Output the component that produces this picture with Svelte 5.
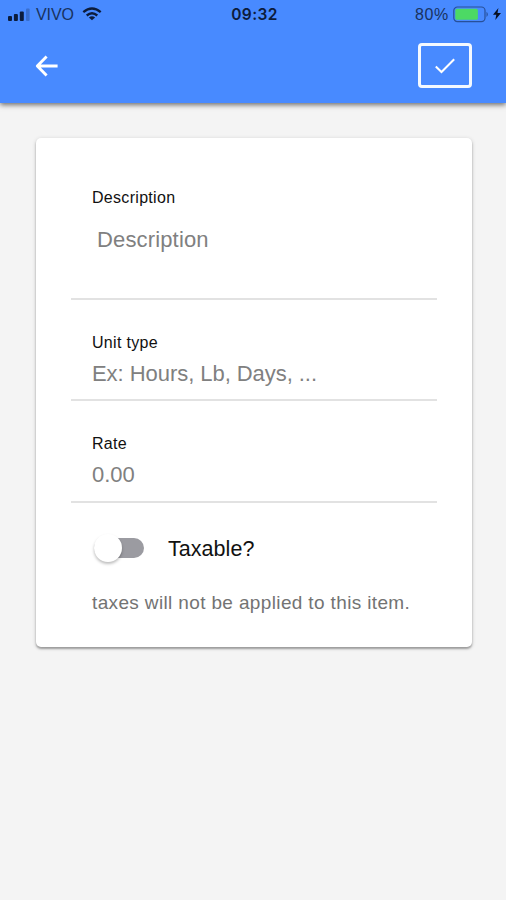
<script>
  let description = $state('');
  let unitType = $state('');
  let rate = $state('');
  let taxable = $state(false);
</script>

<div class="screen">
  <header>
    <div class="status">
      <div class="side">
        <svg class="signal" width="22" height="13" viewBox="0 0 22 13">
          <rect x="0" y="8" width="4" height="5" rx="1" />
          <rect x="5.9" y="6" width="4" height="7" rx="1" />
          <rect x="11.8" y="3.5" width="4" height="9.5" rx="1" />
          <rect x="18" y="0.5" width="3.6" height="12.5" rx="1" opacity=".25" />
        </svg>
        <span class="carrier">VIVO</span>
        <svg class="wifi" width="20" height="14" viewBox="0 0 20 14">
          <g fill="none" stroke="#0c1c3c" stroke-width="2.3">
            <path d="M1.3 5.2Q10 -2.2 18.7 5.2" />
            <path d="M4.7 8.5Q10 4 15.3 8.5" />
          </g>
          <path d="M10 13.3L6.9 10.5Q10 8 13.1 10.5Z" fill="#0c1c3c" />
        </svg>
      </div>
      <span class="time">09:32</span>
      <div class="side end">
        <span class="percent">80%</span>
        <svg class="battery" width="37" height="17" viewBox="0 0 37 17">
          <rect x=".8" y="1" width="31.2" height="14.6" rx="3.6" fill="none" stroke="#285099" stroke-width="1.2" />
          <rect x="2.3" y="2.8" width="22.6" height="11" rx="1.6" fill="#4cd964" />
          <path d="M33.5 5.7Q36.2 8.3 33.5 11Z" fill="#285099" />
        </svg>
        <svg class="bolt" width="8" height="12" viewBox="0 0 8 12">
          <path d="M5.4 0L0 6.7H3.3L2.3 12L8 5H4.5Z" fill="#081020" />
        </svg>
      </div>
    </div>
    <div class="toolbar">
      <button class="back" aria-label="Back">
        <svg width="24" height="24" viewBox="0 0 24 24" fill="none" stroke="#fff" stroke-width="2.9" stroke-linejoin="round">
          <path d="M12.6 2.6L3.3 12L12.6 21.4M3.6 12H23.6" />
        </svg>
      </button>
      <button class="save" aria-label="Save">
        <svg width="20" height="16" viewBox="0 0 20 16" fill="none" stroke="#fff" stroke-width="2">
          <path d="M.8 8.5L6.5 14L19.2 1.2" />
        </svg>
      </button>
    </div>
  </header>

  <main>
    <label class="field tall">
      <span>Description</span>
      <textarea placeholder="Description" bind:value={description}></textarea>
    </label>
    <label class="field unit">
      <span>Unit type</span>
      <input placeholder="Ex: Hours, Lb, Days, ..." bind:value={unitType} />
    </label>
    <label class="field rate">
      <span>Rate</span>
      <input placeholder="0.00" bind:value={rate} />
    </label>
    <button class="toggle" role="switch" aria-checked={taxable} onclick={() => (taxable = !taxable)}>
      <span class="track" class:on={taxable}><span class="knob"></span></span>
      <span class="name">Taxable?</span>
    </button>
    <p>taxes will {taxable ? '' : 'not '}be applied to this item.</p>
  </main>
</div>

<style>
  :global(body) {
    background: #f4f4f4;
  }
  .screen {
    box-sizing: border-box;
    height: 900px;
    overflow: hidden;
    background: #f4f4f4;
    font-family: 'Liberation Sans', Arial, sans-serif;
    color: #111;
  }
  header {
    height: 103px;
    background: #488aff;
    box-shadow: 0 2px 5px rgba(0, 0, 0, 0.55);
  }
  .status {
    display: flex;
    align-items: center;
    height: 29px;
    padding: 0 5px 0 8px;
    color: #0c1c3c;
  }
  .side {
    display: flex;
    align-items: center;
    flex: 1;
  }
  .end {
    justify-content: flex-end;
  }
  .signal {
    fill: #0c1c3c;
    margin-right: 6px;
  }
  .carrier {
    width: 38px;
    font-size: 16px;
    letter-spacing: -0.1px;
    color: #183260;
  }
  .wifi {
    margin-left: 8px;
    margin-top: -2px;
  }
  .time {
    font-family: Inter, sans-serif;
    font-weight: 600;
    font-size: 15.5px;
    letter-spacing: 0.4px;
  }
  .percent {
    font-size: 16px;
    letter-spacing: 0.7px;
    color: #183260;
    margin-right: 4px;
  }
  .bolt {
    margin-left: 3px;
    margin-top: -2px;
  }
  .toolbar {
    display: flex;
    justify-content: space-between;
    align-items: center;
    height: 73px;
    padding: 0 34px;
  }
  button {
    display: flex;
    align-items: center;
    padding: 0;
    border: 0;
    background: none;
    font: inherit;
    color: inherit;
  }
  .save {
    box-sizing: border-box;
    justify-content: center;
    width: 54px;
    height: 45px;
    border: 3px solid #f4f9ff;
    border-radius: 4px;
  }
  main {
    box-sizing: border-box;
    width: 436px;
    height: 509px;
    margin: 35px 0 0 36px;
    padding: 0 35px;
    background: #fff;
    border-radius: 5px;
    box-shadow: 0 2px 2px rgba(0, 0, 0, 0.28), 0 1px 4px rgba(0, 0, 0, 0.18);
  }
  .field {
    box-sizing: border-box;
    display: flex;
    flex-direction: column;
    height: 101px;
    padding: 34px 0 0 21px;
    border-bottom: 2px solid #e2e2e2;
  }
  .tall {
    height: 162px;
    padding-top: 51px;
  }
  .rate {
    height: 102px;
  }
  .field span {
    font-size: 16px;
    line-height: 18px;
    letter-spacing: 0.3px;
  }
  input,
  textarea {
    display: block;
    width: 340px;
    height: 26px;
    margin: 9px 0 0;
    padding: 0;
    border: 0;
    outline: 0;
    resize: none;
    background: none;
    font: 22px/26px 'Liberation Sans', Arial, sans-serif;
    letter-spacing: -0.05px;
  }
  textarea {
    width: 330px;
    height: 52px;
    margin: 20px 0 0 5px;
    overflow: hidden;
    letter-spacing: 0.15px;
  }
  ::placeholder {
    color: #808080;
    opacity: 1;
  }
  .toggle {
    margin: 31px 0 0 23px;
    height: 28px;
  }
  .track {
    display: flex;
    align-items: center;
    width: 50px;
    height: 20px;
    border-radius: 10px;
    background: #9b9ba1;
  }
  .track.on {
    justify-content: flex-end;
    background: #91b9ff;
  }
  .knob {
    width: 28px;
    height: 28px;
    flex: none;
    border-radius: 50%;
    background: #fff;
    box-shadow: 0 2px 3px rgba(0, 0, 0, 0.26);
  }
  .name {
    margin-left: 24px;
    padding-top: 3px;
    font-size: 21.5px;
    letter-spacing: 0.05px;
  }
  p {
    margin: 30px 0 0 21px;
    font-size: 19px;
    line-height: 22px;
    letter-spacing: 0.36px;
    color: #737373;
    white-space: nowrap;
  }
</style>
